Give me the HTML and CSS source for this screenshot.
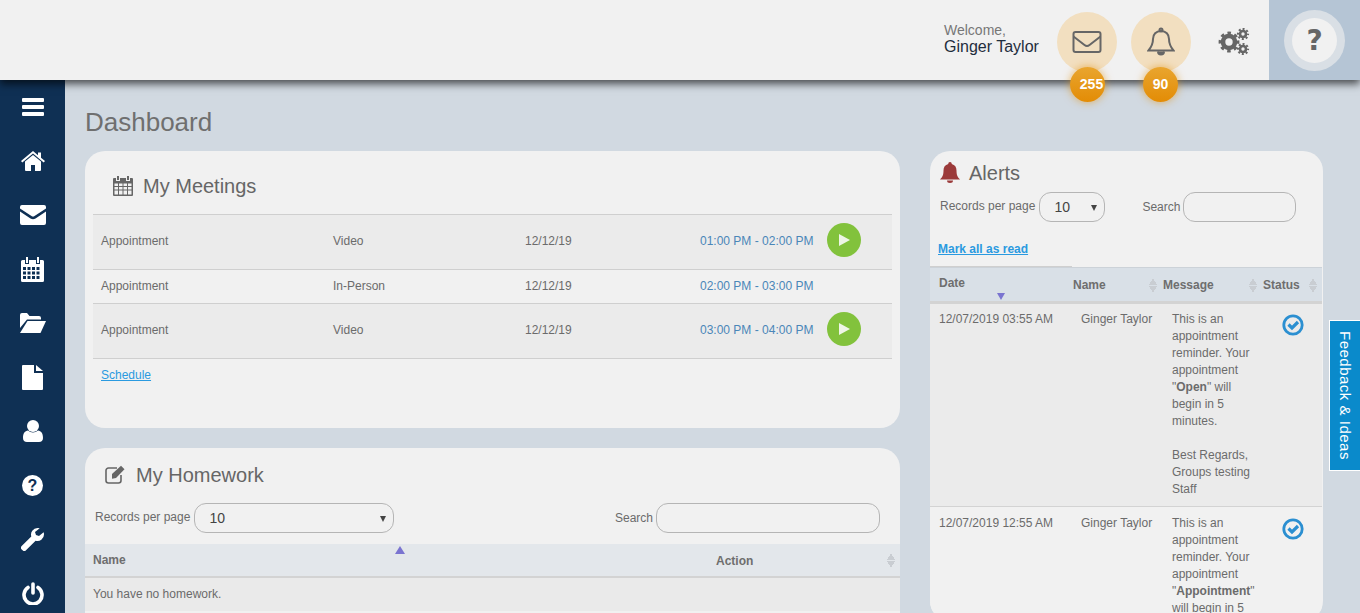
FILE: index.html
```html
<!DOCTYPE html>
<html>
<head>
    <meta charset="UTF-8">
    <meta name="viewport" content="width=device-width, initial-scale=1.0">
    <title>Dashboard</title>
    <link rel="stylesheet" href="styles.css">
</head>
<body>
    <header class="topbar">
        <div class="welcome">
            <span class="welcome-label">Welcome,</span>
            <span class="welcome-name">Ginger Taylor</span>
        </div>
        <div class="round-btn">
            <svg width="30" height="22" viewBox="0 0 30 22" fill="none" stroke="#666" stroke-width="2"><rect x="1.500" y="1" width="27" height="20" rx="2"/><path d="M1.500 5.500l11 8.500q2.500 2 5 0l11-8.500"/></svg>
            <span class="badge badge-wide">255</span>
        </div>
        <div class="round-btn">
            <svg width="28" height="30" viewBox="0 0 28 30" fill="none" stroke="#666" stroke-width="2"><path d="M14 4c-5 0-8 3.500-8 8 0 6-2 8.500-4.500 11.500h25C24 20.500 22 18 22 12c0-4.500-3-8-8-8z"/><circle cx="14" cy="3" r="1.500"/><path d="M11 24.500a3 3 0 0 0 6 0" fill="#666"/></svg>
            <span class="badge badge-narrow">90</span>
        </div>
        <div class="gears">
            <svg width="32" height="28" viewBox="0 0 32 28" fill="none" stroke="#666">
                <circle cx="11" cy="14" r="6" stroke-width="4.600"/>
                <circle cx="11" cy="14" r="8.900" stroke-width="3" stroke-dasharray="3.490 3.490" stroke-dashoffset="1.750"/>
                <circle cx="25" cy="6" r="3" stroke-width="2.600"/>
                <circle cx="25" cy="6" r="5" stroke-width="2.200" stroke-dasharray="1.960 1.960" stroke-dashoffset="0.980"/>
                <circle cx="25" cy="21" r="3" stroke-width="2.600"/>
                <circle cx="25" cy="21" r="5" stroke-width="2.200" stroke-dasharray="1.960 1.960" stroke-dashoffset="0.980"/>
            </svg>
        </div>
        <div class="help-area">
            <div class="help-ring"><div class="help-inner">?</div></div>
        </div>
    </header>

    <div class="layout">
        <nav class="sidebar">
            <svg width="22" height="18" viewBox="0 0 22 18" fill="#fff"><rect y="0" width="22" height="4" rx="1"/><rect y="7" width="22" height="4" rx="1"/><rect y="14" width="22" height="4" rx="1"/></svg>
            <svg width="24" height="20" viewBox="0 0 24 20" fill="#fff"><path d="M12 4L4 10.500V19a1 1 0 0 0 1 1h5v-6h4v6h5a1 1 0 0 0 1-1v-8.500z"/><path d="M12 0L0 10l1.300 1.500L12 2.600l10.700 8.900L24 10l-4-3.300V1.500h-3v2.700z"/></svg>
            <svg width="26" height="20" viewBox="0 0 26 20" fill="#fff"><path d="M2 0h22a2 2 0 0 1 2 2v1.500L14.500 11q-1.500 1-3 0L0 3.500V2a2 2 0 0 1 2-2z"/><path d="M0 6.500V18a2 2 0 0 0 2 2h22a2 2 0 0 0 2-2V6.500L15.500 13.500q-2.500 1.500-5 0z"/></svg>
            <svg width="23" height="25" viewBox="0 0 23 25" fill="#fff"><path d="M5 0h2v6H5zM16 0h2v6h-2z"/><path fill-rule="evenodd" d="M1.500 3H4v4h4V3h7v4h4V3h2.500A1.500 1.500 0 0 1 23 4.500v19a1.500 1.500 0 0 1-1.500 1.500h-20A1.500 1.500 0 0 1 0 23.500v-19A1.500 1.500 0 0 1 1.500 3zM2 10v3h3v-3zM6.500 10v3h3v-3zM11 10v3h3v-3zM15.500 10v3h3v-3zM2 14.500v3h3v-3zM6.500 14.500v3h3v-3zM11 14.500v3h3v-3zM15.500 14.500v3h3v-3zM2 19v3h3v-3zM6.500 19v3h3v-3zM11 19v3h3v-3zM15.500 19v3h3v-3z"/></svg>
            <svg width="26" height="20" viewBox="0 0 26 20" fill="#fff"><path d="M0 2a2 2 0 0 1 2-2h5l2.500 3H19a2 2 0 0 1 2 2v1.500H7L0 15z"/><path d="M7.500 8H26l-5.500 12H0z"/></svg>
            <svg width="21" height="25" viewBox="0 0 21 25" fill="#fff"><path d="M0 1a1 1 0 0 1 1-1h11v8h9v16a1 1 0 0 1-1 1H1a1 1 0 0 1-1-1z"/><path d="M14 0l7 6h-7z"/></svg>
            <svg width="20" height="22" viewBox="0 0 20 22" fill="#fff"><circle cx="10" cy="6" r="6"/><path d="M0 18c0-5 2-7 5-7.500 3 2.500 7 2.500 10 0 3 .5 5 2.500 5 7.500 0 2.500-1.500 4-4 4H4c-2.500 0-4-1.500-4-4z"/></svg>
            <svg width="21" height="21" viewBox="0 0 21 21"><circle cx="10.500" cy="10.500" r="10.500" fill="#fff"/><text x="10.500" y="16" class="nav-q">?</text></svg>
            <svg width="23" height="23" viewBox="0 0 23 23" fill="#fff"><path d="M16.500 0a6.500 6.500 0 0 0-6.200 8.400L.7 18a2.400 2.400 0 0 0 0 3.400l.9.900a2.400 2.400 0 0 0 3.400 0l9.600-9.600A6.500 6.500 0 0 0 23 6.500c0-.8-.1-1.500-.4-2.200L18 8l-3-1-1-3 4.700-3.700A6.500 6.500 0 0 0 16.500 0z"/></svg>
            <svg width="22" height="23" viewBox="0 0 22 23" fill="none" stroke="#fff" stroke-width="3.600" stroke-linecap="round"><path d="M6 5.500a9 9 0 1 0 10 0"/><path d="M11 2v9"/></svg>
        </nav>

        <main class="content">
            <h1 class="page-title">Dashboard</h1>
            <div class="columns">
                <div class="col-left">
                    <section class="card meetings">
                        <h2 class="card-title meetings-title">
                            <svg width="20" height="20" viewBox="0 0 20 20" fill="#666"><path d="M4 0h2v4H4zM14 0h2v4h-2z"/><path fill-rule="evenodd" d="M1 2h2v3h4V2h6v3h4V2h2a1 1 0 0 1 1 1v16a1 1 0 0 1-1 1H1a1 1 0 0 1-1-1V3a1 1 0 0 1 1-1zM1.500 7.500v2.500h3.500V7.500zM6 7.500v2.500h3.500V7.500zM10.500 7.500v2.500H14V7.500zM15 7.500v2.500h3.500V7.500zM1.500 11v2.500h3.500V11zM6 11v2.500h3.500V11zM10.500 11v2.500H14V11zM15 11v2.500h3.500V11zM1.500 14.500v4h3.500v-4zM6 14.500v4h3.500v-4zM10.500 14.500v4H14v-4zM15 14.500v4h3.500v-4z"/></svg>
                            My Meetings
                        </h2>
                        <table class="meeting-table">
                            <tr class="tall shaded">
                                <td class="m-type">Appointment</td>
                                <td class="m-mode">Video</td>
                                <td class="m-date">12/12/19</td>
                                <td class="m-time">01:00 PM - 02:00 PM</td>
                                <td class="m-act"><span class="play"></span></td>
                            </tr>
                            <tr>
                                <td class="m-type">Appointment</td>
                                <td class="m-mode">In-Person</td>
                                <td class="m-date">12/12/19</td>
                                <td class="m-time">02:00 PM - 03:00 PM</td>
                                <td class="m-act"></td>
                            </tr>
                            <tr class="tall shaded">
                                <td class="m-type">Appointment</td>
                                <td class="m-mode">Video</td>
                                <td class="m-date">12/12/19</td>
                                <td class="m-time">03:00 PM - 04:00 PM</td>
                                <td class="m-act"><span class="play"></span></td>
                            </tr>
                        </table>
                        <a class="link schedule" href="#">Schedule</a>
                    </section>

                    <section class="card homework">
                        <h2 class="card-title homework-title">
                            <svg width="21" height="19" viewBox="0 0 21 19" fill="none" stroke="#666" stroke-width="1.600"><path d="M16 10v5.500a2.500 2.500 0 0 1-2.500 2.500h-10A2.500 2.500 0 0 1 1 15.500v-10A2.500 2.500 0 0 1 3.500 3H12"/><path d="M7 9l9-8.200 3.500 3.500L11 13l-4 .8z" fill="#666" stroke="none"/></svg>
                            My Homework
                        </h2>
                        <div class="controls homework-controls">
                            <label class="records">Records per page
                                <span class="select-wrap wide"><select><option>10</option></select></span>
                            </label>
                            <label class="search">Search <input type="text" class="search-input wide"></label>
                        </div>
                        <div class="hw-head">
                            <span class="hw-name">Name</span>
                            <span class="sort-up"></span>
                            <span class="hw-action">Action</span>
                            <span class="sort-both"></span>
                        </div>
                        <div class="hw-empty">You have no homework.</div>
                    </section>
                </div>

                <section class="card alerts">
                    <h2 class="card-title alerts-title">
                        <svg width="20" height="21" viewBox="0 0 20 21" fill="#9b3a3a"><path d="M10 0a1.700 1.700 0 0 1 1.700 1.900C15 2.600 16.500 5.300 16.500 8.500c0 4.500 1 6.500 3.500 9H0c2.500-2.500 3.500-4.500 3.500-9 0-3.200 1.500-5.900 4.800-6.600A1.700 1.700 0 0 1 10 0z"/><path d="M7 18.500h6a3 2.500 0 0 1-6 0z"/></svg>
                        Alerts
                    </h2>
                    <div class="controls alerts-controls">
                        <label class="records">Records per page
                            <span class="select-wrap"><select><option>10</option></select></span>
                        </label>
                        <label class="search">Search <input type="text" class="search-input"></label>
                    </div>
                    <a class="link mark-read" href="#">Mark all as read</a>
                    <div class="alert-rule"></div>
                    <table class="alert-table">
                        <thead>
                            <tr>
                                <th class="a-date"><span class="date-head">Date</span><span class="sort-down"></span></th>
                                <th class="a-name">Name<span class="sort-both"></span></th>
                                <th class="a-msg">Message<span class="sort-both"></span></th>
                                <th class="a-status">Status<span class="sort-both"></span></th>
                            </tr>
                        </thead>
                        <tbody>
                            <tr>
                                <td class="a-date">12/07/2019 03:55 AM</td>
                                <td class="a-name">Ginger Taylor</td>
                                <td class="a-msg">This is an<br>appointment<br>reminder. Your<br>appointment<br>"<b>Open</b>" will<br>begin in 5<br>minutes.<br><br>Best Regards,<br>Groups testing<br>Staff</td>
                                <td class="a-status"><svg width="22" height="22" viewBox="0 0 22 22" fill="none" stroke="#2b8fd1"><circle cx="11" cy="11" r="9.200" stroke-width="2.800"/><path d="M6.500 10.500l3.500 3.500 6-6" stroke-width="3.200"/></svg></td>
                            </tr>
                            <tr>
                                <td class="a-date">12/07/2019 12:55 AM</td>
                                <td class="a-name">Ginger Taylor</td>
                                <td class="a-msg">This is an<br>appointment<br>reminder. Your<br>appointment<br>"<b>Appointment</b>"<br>will begin in 5</td>
                                <td class="a-status"><svg width="22" height="22" viewBox="0 0 22 22" fill="none" stroke="#2b8fd1"><circle cx="11" cy="11" r="9.200" stroke-width="2.800"/><path d="M6.500 10.500l3.500 3.500 6-6" stroke-width="3.200"/></svg></td>
                            </tr>
                        </tbody>
                    </table>
                </section>
            </div>
        </main>
    </div>

    <div class="feedback"><span>Feedback &amp; Ideas</span></div>
</body>
</html>
```

FILE: styles.css
```css
* {
    box-sizing: border-box;
}
html, body {
    height: 100%;
}
body {
    margin: 0;
    height: 613px;
    overflow: hidden;
    background-color: #d1d9e1;
    color: #6b6b6b;
    font-family: "Liberation Sans", Arial, sans-serif;
    font-size: 12px;
}

/* top bar */
.topbar {
    position: relative;
    z-index: 5;
    height: 80px;
    display: flex;
    align-items: center;
    background-color: #f1f1f1;
    box-shadow: 0 4px 8px rgba(0, 0, 0, 0.65);
    padding-left: 944px;
}
.welcome {
    display: flex;
    flex-direction: column;
    width: 113px;
    margin-top: -3px;
}
.welcome-label {
    font-size: 14px;
    line-height: 15px;
    color: #777;
}
.welcome-name {
    font-size: 16px;
    line-height: 17px;
    color: #1f2d3d;
}
.round-btn {
    position: relative;
    width: 60px;
    height: 60px;
    margin-top: 4px;
    margin-right: 14px;
    border-radius: 50%;
    background-color: #f2dfc0;
    display: flex;
    align-items: center;
    justify-content: center;
}
.badge {
    position: absolute;
    top: 55px;
    width: 35px;
    height: 35px;
    border-radius: 50%;
    background: linear-gradient(#e9a52f, #e38c05);
    box-shadow: 0 0 8px rgba(227, 140, 5, 0.6);
    color: #fff;
    font-size: 14px;
    font-weight: bold;
    line-height: 35px;
    text-align: center;
}
.badge-wide {
    left: 13px;
    padding-left: 8px;
    white-space: nowrap;
}
.badge-narrow {
    left: 12px;
}
.gears {
    width: 32px;
    height: 28px;
    margin-top: 4px;
    margin-left: 13px;
    margin-right: 19px;
}
.help-area {
    width: 91px;
    height: 80px;
    background-color: #b5c5d5;
    display: flex;
    align-items: center;
    justify-content: center;
}
.help-ring {
    width: 61px;
    height: 61px;
    border-radius: 50%;
    background: radial-gradient(circle, #d9dfe5 70%, #eceef1 100%);
    display: flex;
    align-items: center;
    justify-content: center;
}
.help-inner {
    width: 45px;
    height: 45px;
    border-radius: 50%;
    background-color: #f1f1f1;
    color: #666;
    font-size: 28px;
    font-weight: bold;
    font-family: "DejaVu Sans", sans-serif;
    line-height: 45px;
    text-align: center;
}

/* main layout */
.layout {
    display: flex;
    height: 533px;
}
.sidebar {
    width: 65px;
    flex-shrink: 0;
    background-color: #0f3054;
    display: grid;
    grid-auto-rows: 54px;
    place-items: center;
    height: 533px;
    overflow: hidden;
}
.nav-q {
    font-family: "Liberation Sans", Arial, sans-serif;
    font-size: 16px;
    font-weight: bold;
    fill: #0f3054;
    text-anchor: middle;
}
.content {
    flex: 1;
    padding-left: 20px;
    min-width: 0;
}
.page-title {
    margin: 0;
    padding-top: 27px;
    height: 71px;
    font-size: 26px;
    line-height: 30px;
    font-weight: normal;
    color: #6f6f6f;
}
.columns {
    display: flex;
    align-items: flex-start;
    gap: 30px;
}
.col-left {
    width: 815px;
    display: flex;
    flex-direction: column;
    gap: 20px;
}
.card {
    background-color: #f1f1f1;
    border-radius: 20px;
    overflow: hidden;
}
.card-title {
    margin: 0;
    display: flex;
    align-items: center;
    font-size: 20px;
    line-height: 24px;
    font-weight: normal;
    color: #666;
}

/* meetings */
.meetings {
    height: 277px;
    padding: 0 8px;
}
.meetings-title {
    height: 63px;
    padding: 7px 0 0 20px;
    gap: 10px;
}
.meeting-table {
    width: 799px;
    border-collapse: collapse;
    table-layout: fixed;
}
.meeting-table tr {
    height: 34px;
    border-top: 1px solid #cfcfcf;
    border-bottom: 1px solid #cfcfcf;
}
.meeting-table tr.tall {
    height: 55px;
}
.meeting-table tr.shaded {
    background-color: #ebebeb;
}
.meeting-table td {
    padding: 0 0 2px;
    color: #6b6b6b;
}
.meeting-table tr.tall td {
    padding-bottom: 3px;
}
.meeting-table tr.tall .m-act {
    padding-bottom: 5px;
}
.m-type {
    width: 240px;
    padding-left: 8px !important;
}
.m-mode {
    width: 192px;
}
.m-date {
    width: 175px;
}
.m-time {
    width: 127px;
    color: #4a86b8 !important;
}
.play {
    display: block;
    position: relative;
    width: 34px;
    height: 34px;
    border-radius: 50%;
    background-color: #82c23c;
}
.play::after {
    content: "";
    position: absolute;
    left: 12px;
    top: 11px;
    border-left: 11px solid #eef5e6;
    border-top: 6px solid transparent;
    border-bottom: 6px solid transparent;
}
.link {
    color: #2a9ae0;
    text-decoration: underline;
}
.schedule {
    display: inline-block;
    margin: 9px 0 0 8px;
}

/* homework */
.homework {
    height: 200px;
}
.homework-title {
    height: 55px;
    padding: 0 0 2px 20px;
    gap: 10px;
}
.controls {
    display: flex;
    justify-content: space-between;
}
.homework-controls {
    padding: 0 20px 0 10px;
    height: 41px;
}
.records {
    display: flex;
    align-items: flex-start;
    gap: 4px;
    height: 30px;
    line-height: 28px;
    white-space: nowrap;
}
.search {
    display: flex;
    align-items: center;
    gap: 3px;
    height: 30px;
}
.select-wrap {
    position: relative;
    display: block;
    width: 66px;
    height: 30px;
}
.select-wrap.wide {
    width: 200px;
}
.select-wrap::after {
    content: "";
    position: absolute;
    right: 8px;
    top: 13px;
    border-top: 6px solid #444;
    border-left: 3px solid transparent;
    border-right: 3px solid transparent;
}
.select-wrap select {
    width: 100%;
    height: 30px;
    appearance: none;
    background: transparent;
    border: 1px solid #b5b5b5;
    border-radius: 12px;
    padding: 0 14px;
    color: #444;
    font-family: "Liberation Sans", Arial, sans-serif;
    font-size: 14px;
}
.search-input {
    width: 113px;
    height: 30px;
    background: transparent;
    border: 1px solid #b5b5b5;
    border-radius: 12px;
}
.search-input.wide {
    width: 224px;
}
.hw-head {
    position: relative;
    height: 34px;
    display: flex;
    align-items: center;
    background-color: #e3e7eb;
    border-bottom: 2px solid #d3d3d3;
    font-weight: bold;
    color: #6e6e6e;
}
.hw-name {
    margin-left: 8px;
    width: 623px;
}
.hw-action {
    width: 171px;
    margin-top: 1px;
}
.hw-head .sort-up {
    position: absolute;
    left: 310px;
    top: 2px;
}
.hw-empty {
    height: 33px;
    padding: 9px 0 0 8px;
    background-color: #eaeaea;
}

/* sort arrows */
.sort-up {
    display: inline-block;
    border-bottom: 8px solid #7a74d0;
    border-left: 5px solid transparent;
    border-right: 5px solid transparent;
}
.sort-down {
    position: absolute;
    left: 67px;
    top: 25px;
    border-top: 7px solid #7a74d0;
    border-left: 4.500px solid transparent;
    border-right: 4.500px solid transparent;
}
.sort-both {
    display: inline-block;
    width: 8px;
    height: 15px;
    background:
        linear-gradient(to bottom right, transparent 50%, #c9cdd2 50%) 0 0 / 4px 7px no-repeat,
        linear-gradient(to bottom left, transparent 50%, #c9cdd2 50%) 4px 0 / 4px 7px no-repeat,
        linear-gradient(to top right, transparent 50%, #c9cdd2 50%) 0 8px / 4px 7px no-repeat,
        linear-gradient(to top left, transparent 50%, #c9cdd2 50%) 4px 8px / 4px 7px no-repeat;
}

/* alerts */
.alerts {
    width: 393px;
    height: 470px;
}
.alerts-title {
    height: 41px;
    padding: 2px 0 0 10px;
    gap: 9px;
}
.alerts-controls {
    padding: 0 27px 0 10px;
    justify-content: flex-start;
    gap: 37px;
    height: 47px;
}
.mark-read {
    display: block;
    margin-left: 8px;
    height: 27px;
    font-weight: bold;
    line-height: 20px;
}
.alert-rule {
    width: 142px;
    height: 1px;
    background-color: #cfcfcf;
}
.alert-table {
    width: 392px;
    border-collapse: collapse;
    table-layout: fixed;
}
.alert-table th {
    position: relative;
    height: 35px;
    padding: 0;
    background-color: #d9e0e7;
    border-top: 1px solid #ccd2d8;
    border-bottom: 3px solid #d3d3d3;
    text-align: left;
    color: #6e6e6e;
}
.alert-table th .sort-both {
    position: absolute;
    z-index: 1;
    right: -3px;
    top: 10px;
}
.alert-table th.a-status .sort-both {
    right: 5px;
}
.date-head {
    display: block;
    margin-top: -4px;
}
.alert-table th.a-date {
    width: 134px;
    padding-left: 9px;
}
.alert-table th.a-name {
    width: 90px;
    padding-left: 9px;
}
.alert-table th.a-msg {
    width: 100px;
    padding-left: 9px;
}
.alert-table th.a-status {
    padding-left: 9px;
}
.alert-table td {
    vertical-align: top;
    padding: 7px 0 8px;
    background-color: #ebebeb;
    border-bottom: 1px solid #d3d3d3;
    line-height: 17px;
}
.alert-table tbody tr:nth-child(even) td {
    padding-top: 8px;
    background-color: #f1f1f1;
}
.alert-table td.a-date {
    padding-left: 9px;
}
.alert-table td.a-name {
    padding-left: 17px;
}
.alert-table td.a-msg {
    padding-left: 18px;
}
.alert-table td.a-status {
    padding-left: 28px;
}
.a-status svg {
    display: block;
    margin-top: 3px;
}

/* feedback tab */
.feedback {
    position: absolute;
    left: 1329px;
    top: 320px;
    width: 31px;
    height: 151px;
    background-color: #0a8acb;
    border: 1px solid #fff;
    border-right: none;
    display: flex;
    align-items: center;
    justify-content: center;
    color: #fff;
}
.feedback span {
    writing-mode: vertical-rl;
    font-size: 15px;
    letter-spacing: 0.5px;
    white-space: nowrap;
}
```
